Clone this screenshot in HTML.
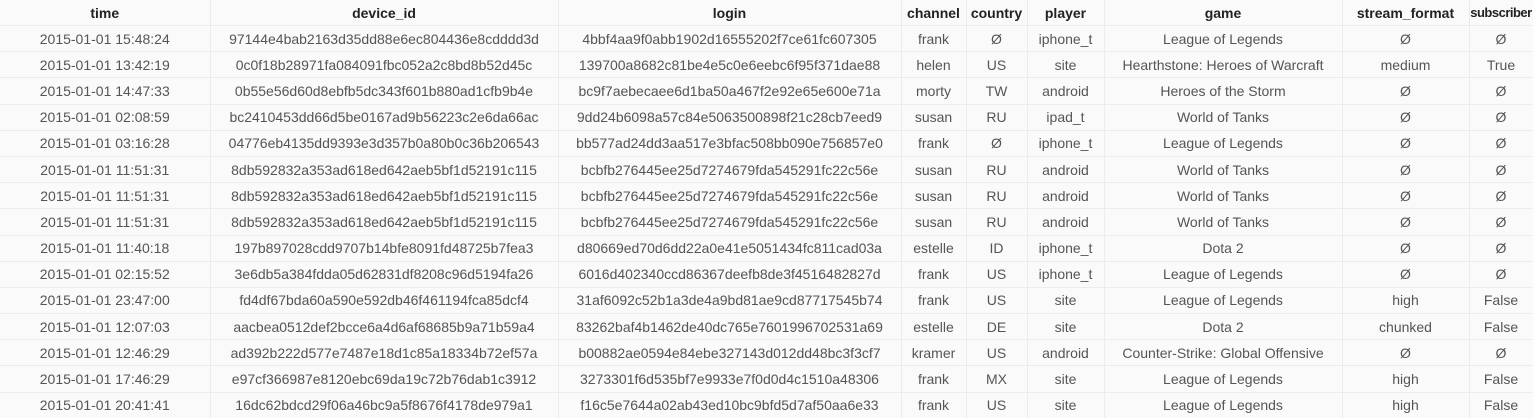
<!DOCTYPE html>
<html><head><meta charset="utf-8"><style>
html,body{margin:0;padding:0;background:#fafafb;width:1533px;height:418px;overflow:hidden}
table{border-collapse:collapse;table-layout:fixed;width:1533px;font-family:"Liberation Sans",sans-serif;font-size:14px}
td,th{text-align:center;white-space:nowrap;overflow:hidden;border:1px solid #ececef;padding:0;height:25.2px}
th{color:#222;font-weight:bold;height:25px;border-top:none}
td{color:#555}
tr td:first-child,tr th:first-child{border-left:none}
th.s{font-size:13px;letter-spacing:-0.5px}
</style></head><body>
<table>
<colgroup><col style="width:210px"><col style="width:348px"><col style="width:343px"><col style="width:65px"><col style="width:61px"><col style="width:77px"><col style="width:238px"><col style="width:127px"><col style="width:64px"></colgroup>
<tr><th>time</th><th>device_id</th><th>login</th><th>channel</th><th>country</th><th>player</th><th>game</th><th>stream_format</th><th class="s">subscriber</th></tr>
<tr><td>2015-01-01 15:48:24</td><td>97144e4bab2163d35dd88e6ec804436e8cdddd3d</td><td>4bbf4aa9f0abb1902d16555202f7ce61fc607305</td><td>frank</td><td>Ø</td><td>iphone_t</td><td>League of Legends</td><td>Ø</td><td>Ø</td></tr>
<tr><td>2015-01-01 13:42:19</td><td>0c0f18b28971fa084091fbc052a2c8bd8b52d45c</td><td>139700a8682c81be4e5c0e6eebc6f95f371dae88</td><td>helen</td><td>US</td><td>site</td><td>Hearthstone: Heroes of Warcraft</td><td>medium</td><td>True</td></tr>
<tr><td>2015-01-01 14:47:33</td><td>0b55e56d60d8ebfb5dc343f601b880ad1cfb9b4e</td><td>bc9f7aebecaee6d1ba50a467f2e92e65e600e71a</td><td>morty</td><td>TW</td><td>android</td><td>Heroes of the Storm</td><td>Ø</td><td>Ø</td></tr>
<tr><td>2015-01-01 02:08:59</td><td>bc2410453dd66d5be0167ad9b56223c2e6da66ac</td><td>9dd24b6098a57c84e5063500898f21c28cb7eed9</td><td>susan</td><td>RU</td><td>ipad_t</td><td>World of Tanks</td><td>Ø</td><td>Ø</td></tr>
<tr><td>2015-01-01 03:16:28</td><td>04776eb4135dd9393e3d357b0a80b0c36b206543</td><td>bb577ad24dd3aa517e3bfac508bb090e756857e0</td><td>frank</td><td>Ø</td><td>iphone_t</td><td>League of Legends</td><td>Ø</td><td>Ø</td></tr>
<tr><td>2015-01-01 11:51:31</td><td>8db592832a353ad618ed642aeb5bf1d52191c115</td><td>bcbfb276445ee25d7274679fda545291fc22c56e</td><td>susan</td><td>RU</td><td>android</td><td>World of Tanks</td><td>Ø</td><td>Ø</td></tr>
<tr><td>2015-01-01 11:51:31</td><td>8db592832a353ad618ed642aeb5bf1d52191c115</td><td>bcbfb276445ee25d7274679fda545291fc22c56e</td><td>susan</td><td>RU</td><td>android</td><td>World of Tanks</td><td>Ø</td><td>Ø</td></tr>
<tr><td>2015-01-01 11:51:31</td><td>8db592832a353ad618ed642aeb5bf1d52191c115</td><td>bcbfb276445ee25d7274679fda545291fc22c56e</td><td>susan</td><td>RU</td><td>android</td><td>World of Tanks</td><td>Ø</td><td>Ø</td></tr>
<tr><td>2015-01-01 11:40:18</td><td>197b897028cdd9707b14bfe8091fd48725b7fea3</td><td>d80669ed70d6dd22a0e41e5051434fc811cad03a</td><td>estelle</td><td>ID</td><td>iphone_t</td><td>Dota 2</td><td>Ø</td><td>Ø</td></tr>
<tr><td>2015-01-01 02:15:52</td><td>3e6db5a384fdda05d62831df8208c96d5194fa26</td><td>6016d402340ccd86367deefb8de3f4516482827d</td><td>frank</td><td>US</td><td>iphone_t</td><td>League of Legends</td><td>Ø</td><td>Ø</td></tr>
<tr><td>2015-01-01 23:47:00</td><td>fd4df67bda60a590e592db46f461194fca85dcf4</td><td>31af6092c52b1a3de4a9bd81ae9cd87717545b74</td><td>frank</td><td>US</td><td>site</td><td>League of Legends</td><td>high</td><td>False</td></tr>
<tr><td>2015-01-01 12:07:03</td><td>aacbea0512def2bcce6a4d6af68685b9a71b59a4</td><td>83262baf4b1462de40dc765e7601996702531a69</td><td>estelle</td><td>DE</td><td>site</td><td>Dota 2</td><td>chunked</td><td>False</td></tr>
<tr><td>2015-01-01 12:46:29</td><td>ad392b222d577e7487e18d1c85a18334b72ef57a</td><td>b00882ae0594e84ebe327143d012dd48bc3f3cf7</td><td>kramer</td><td>US</td><td>android</td><td>Counter-Strike: Global Offensive</td><td>Ø</td><td>Ø</td></tr>
<tr><td>2015-01-01 17:46:29</td><td>e97cf366987e8120ebc69da19c72b76dab1c3912</td><td>3273301f6d535bf7e9933e7f0d0d4c1510a48306</td><td>frank</td><td>MX</td><td>site</td><td>League of Legends</td><td>high</td><td>False</td></tr>
<tr><td>2015-01-01 20:41:41</td><td>16dc62bdcd29f06a46bc9a5f8676f4178de979a1</td><td>f16c5e7644a02ab43ed10bc9bfd5d7af50aa6e33</td><td>frank</td><td>US</td><td>site</td><td>League of Legends</td><td>high</td><td>False</td></tr>
</table>
</body></html>
